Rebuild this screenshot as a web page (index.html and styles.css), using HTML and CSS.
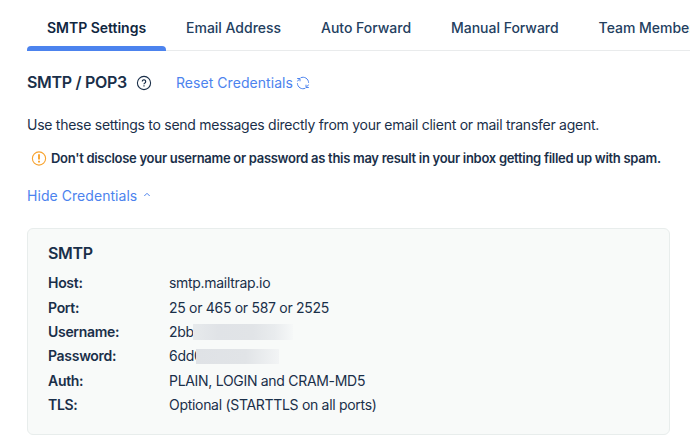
FILE: index.html
```html
<!DOCTYPE html>
<html lang="en">
<head>
<meta charset="utf-8">
<title>SMTP Settings</title>
<link rel="stylesheet" href="styles.css">
</head>
<body>
<nav class="tabs">
  <a class="tab tab-active">SMTP Settings</a>
  <a class="tab">Email Address</a>
  <a class="tab">Auto Forward</a>
  <a class="tab">Manual Forward</a>
  <a class="tab">Team Members</a>
</nav>
<main class="content">
  <header class="heading">
    <h1 class="title">SMTP / POP3</h1>
    <svg class="help" viewBox="0 0 16 16" fill="none" stroke="currentColor">
      <circle cx="8" cy="8" r="6.6" stroke-width="1.1"/>
      <path d="M6.3 6.6a1.7 1.7 0 1 1 2.6 1.4c-.6.35-.9.6-.9 1.2M8 10.2v1.3" stroke-width="1.15"/>
    </svg>
    <a class="link reset">Reset Credentials</a>
    <svg class="refresh" viewBox="0 0 14 14" fill="none" stroke="currentColor">
      <path d="M4.6 1.8A5.6 5.6 0 0 1 12.6 6.8M9.4 12.2A5.6 5.6 0 0 1 1.4 7.2"/>
      <path d="M1.2 2.5H4v2.8M1.5 5.4C1.9 4.4 2.8 3.3 4 2.5M12.8 11.5H10V8.7M12.5 8.6c-.4 1-1.3 2.1-2.5 2.9"/>
    </svg>
  </header>
  <p class="intro">Use these settings to send messages directly from your email client or mail transfer agent.</p>
  <p class="warning">
    <svg class="alert" viewBox="0 0 16 16" fill="none" stroke="currentColor">
      <circle cx="8" cy="8.5" r="6.6" stroke-width="1.1"/>
      <path d="M8 4.2v5.2M8 10.8v1.8" stroke-width="1.9"/>
    </svg>
    <strong class="warning-text">Don't disclose your username or password as this may result in your inbox getting filled up with spam.</strong>
  </p>
  <a class="link toggle"><span class="toggle-text">Hide Credentials</span>
    <svg class="caret" viewBox="0 0 8 6" fill="none" stroke="currentColor"><path d="M1.3 4 4 1.3 6.7 4"/></svg>
  </a>
  <section class="card">
    <h2 class="card-title">SMTP</h2>
    <dl class="rows">
      <dt>Host:</dt><dd>smtp.mailtrap.io</dd>
      <dt>Port:</dt><dd>25 or 465 or 587 or 2525</dd>
      <dt>Username:</dt><dd class="masked"><span class="prefix prefix-user">2bb</span><span class="mask mask-user"></span></dd>
      <dt>Password:</dt><dd class="masked"><span class="prefix prefix-pass">6dd0</span><span class="mask mask-pass"></span></dd>
      <dt>Auth:</dt><dd>PLAIN, LOGIN and CRAM-MD5</dd>
      <dt>TLS:</dt><dd>Optional (STARTTLS on all ports)</dd>
    </dl>
  </section>
</main>
</body>
</html>
```
FILE: styles.css
```css
* { box-sizing: border-box; }
body {
  margin: 0;
  height: 443px;
  overflow: hidden;
  background: #fff;
  color: #1a2f49;
  font: 14px/20px Inter, "Liberation Sans", sans-serif;
}
h1, h2, p, dl, dd { margin: 0; }
.tabs {
  display: flex;
  height: 51px;
  margin-left: 27px;
  overflow: hidden;
  box-shadow: inset 0 -1px #e9ebec;
}
.tab {
  flex: none;
  height: 51px;
  padding: 18px 20px 0;
  font-weight: 500;
  letter-spacing: -0.02px;
  color: #24405f;
  white-space: nowrap;
}
.tab-active {
  position: relative;
  font-weight: 600;
  color: #10263f;
}
.tab-active::after {
  content: "";
  position: absolute;
  left: 0;
  right: 0;
  bottom: 0;
  height: 5px;
  border-radius: 4px 4px 0 0;
  background: #4c83ee;
}
.content { padding: 20px 20px 0 27px; }
.heading { display: flex; align-items: center; height: 24px; }
.title { padding-bottom: 2px; font-size: 16px; font-weight: 600; letter-spacing: -0.3px; white-space: nowrap; width: 109px; }
.help { width: 16px; height: 16px; }
.link { color: #4c83ee; letter-spacing: 0.05px; }
.reset { margin-left: 24px; width: 120px; white-space: nowrap; }
.refresh { width: 14px; height: 14px; color: #4c83ee; }
.intro { margin-top: 20px; letter-spacing: -0.265px; white-space: nowrap; }
.warning { display: flex; align-items: center; height: 20px; margin-top: 13px; padding-left: 4px; }
.alert { flex: none; width: 16px; height: 16px; color: #f8a32f; }
.warning-text { margin-left: 4px; font-size: 13px; font-weight: 600; letter-spacing: -0.29px; white-space: nowrap; }
.toggle { display: flex; align-items: center; width: 140px; margin-top: 18px; }
.toggle-text { width: 116px; white-space: nowrap; }
.caret { width: 8px; height: 6px; margin-bottom: 2px; }
.card {
  height: 207px;
  margin-top: 22px;
  padding: 13px 20px 0;
  border: 1px solid #e8edec;
  border-radius: 6px;
  background: #f8faf9;
}
.card-title { font-size: 16px; font-weight: 600; line-height: 22px; letter-spacing: -0.35px; }
.rows {
  display: grid;
  grid-template-columns: 121px 1fr;
  grid-auto-rows: 24.4px;
  margin-top: 7.2px;
  line-height: 24.4px;
  letter-spacing: -0.3px;
  white-space: nowrap;
}
dt { font-weight: 600; }
.masked { display: flex; align-items: center; }
.prefix { overflow: hidden; }
.prefix-user { width: 24px; }
.prefix-pass { width: 27px; }
.mask { height: 16px; }
.mask-user { width: 100px; background: linear-gradient(90deg, #e7eaec, #e0e3e7 25%, #e1e4e7 60%, #e9ecee 82%, #f6f8f8); }
.mask-pass { width: 83px; height: 15px; background: linear-gradient(90deg, #dfe2e6, #e1e4e7 60%, #f2f4f5); }
```
